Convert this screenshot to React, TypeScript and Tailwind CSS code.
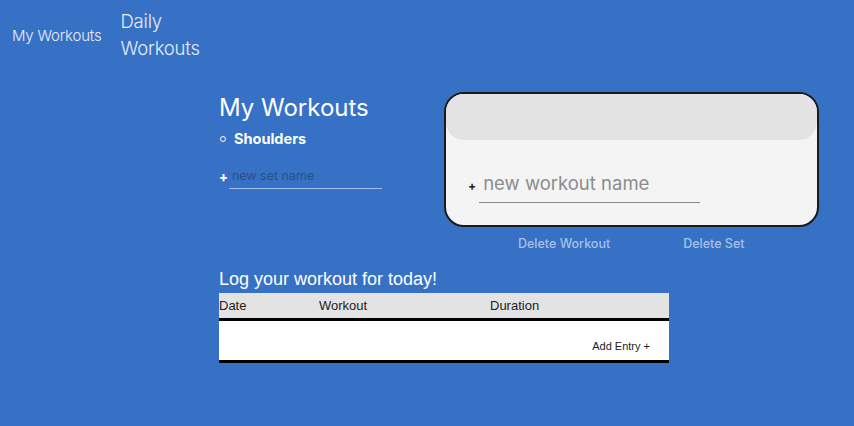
import { useState } from 'react';

const sans = "font-['Inter','Open_Sans',sans-serif]";
const arial = "font-['Liberation_Sans',Arial,sans-serif]";

export default function App() {
    const [setName, setSetName] = useState('');
    const [workoutName, setWorkoutName] = useState('');

    return (
        <div className={`min-h-[426px] w-full bg-[#3671c6] ${sans}`}>
            {/* NAV */}
            <nav className="flex items-center pl-3 pt-[8px] text-[#e6ecf7]">
                <a className="text-[15px] font-light leading-[27px] tracking-[-0.2px]">My Workouts</a>
                <a className="ml-[19px] w-[84px] text-[18.5px] font-light leading-[27px] tracking-[-0.2px]">Daily Workouts</a>
            </nav>

            {/* MAIN */}
            <main className="ml-[219px] mt-[33px] w-[600px]">
                <div className="flex">
                    {/* LEFT COLUMN */}
                    <div className="w-[225px]">
                        <h1 className="mt-[-1px] text-[24px] font-normal leading-[28px] text-white">My Workouts</h1>
                        <ul className="mt-[6px]">
                            <li className="flex items-center">
                                <span className="ml-[1px] h-[6px] w-[6px] rounded-full border border-white" />
                                <span className="ml-[8px] text-[14.5px] font-bold text-white">Shoulders</span>
                            </li>
                        </ul>
                        <div className="mt-[17px] flex items-center">
                            <span className="text-[13px] font-extrabold leading-none text-white">+</span>
                            <input
                                value={setName}
                                onChange={(e) => setSetName(e.target.value)}
                                placeholder="new set name"
                                className="ml-[1px] w-[153px] border-b border-[#a6c0ea] bg-transparent pb-[2px] pl-[3px] text-[12.5px] text-white outline-none placeholder:text-[#2b4f86]"
                            />
                        </div>
                    </div>

                    {/* WORKOUT CARD */}
                    <div className="mt-[-3px]">
                        <div className="h-[135px] w-[375px] overflow-hidden rounded-[20px] border-2 border-[#1a1a1a] bg-[#f4f4f4]">
                            <div className="h-[46px] rounded-b-[18px] bg-[#e3e3e3]" />
                            <div className="mt-[30px] flex items-center pl-[22px]">
                                <span className="text-[12px] font-bold leading-none text-[#222]">+</span>
                                <input
                                    value={workoutName}
                                    onChange={(e) => setWorkoutName(e.target.value)}
                                    placeholder="new workout name"
                                    className="ml-[3px] w-[221px] border-b border-[#8a8a8a] bg-transparent pb-[4px] pl-[4px] text-[18.5px] text-[#333] outline-none placeholder:text-[#8c8c8c]"
                                />
                            </div>
                        </div>
                        <div className="mt-[8px] flex pl-[74px] text-[12.5px] font-medium text-[#a9c0e4]">
                            <button>Delete Workout</button>
                            <button className="ml-[73px]">Delete Set</button>
                        </div>
                    </div>
                </div>

                {/* LOG */}
                <section className={`mt-[13px] w-[450px] ${arial}`}>
                    <h2 className="text-[18px] leading-[24px] text-white">Log your workout for today!</h2>
                    <div className="mt-[2px]">
                        <div className="flex h-[28px] items-center border-b-[3px] border-black bg-[#e3e3e3] text-[13px] text-[#222]">
                            <span className="w-[100px]">Date</span>
                            <span className="w-[171px]">Workout</span>
                            <span>Duration</span>
                        </div>
                        <div className="flex h-[42px] items-end justify-end border-b-[3px] border-black bg-white pb-[5px] pr-[19px] text-[11px] text-[#222]">
                            <button>Add Entry +</button>
                        </div>
                    </div>
                </section>
            </main>
        </div>
    );
}
